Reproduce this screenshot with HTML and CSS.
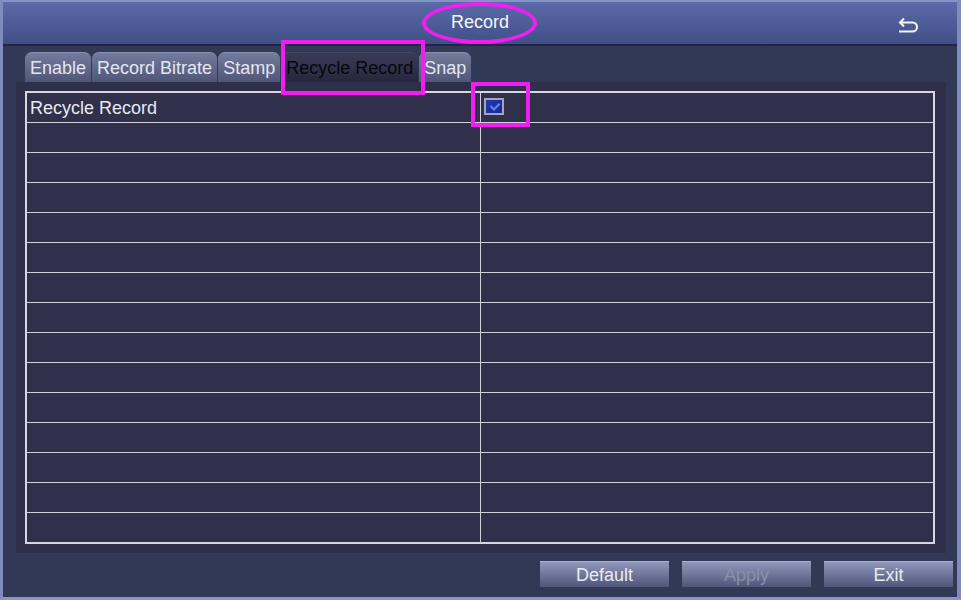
FILE: index.html
```html
<!DOCTYPE html>
<html>
<head>
  <meta charset='utf-8'>
  <title>Record</title>
  <meta name='viewport' content='width=device-width, initial-scale=1'>
  <link rel="stylesheet" href="styles.css">
</head>
<body>
  <div class="screen">
    <div class="header">
      <div></div>
      <div class="title">Record</div>
      <div class="back">
        <svg width="24" height="16" viewBox="0 0 24 16">
          <path d="M3 5.5 H15.5 A4.5 4.5 0 0 1 15.5 14.5 H2" fill="none" stroke="#f4f6fc" stroke-width="2"/>
          <path d="M7 1.5 L3 5.5 L7 9.5" fill="none" stroke="#f4f6fc" stroke-width="2"/>
        </svg>
      </div>
    </div>

    <div class="content">
      <div class="tabs">
        <div class="tab">Enable</div>
        <div class="tab">Record Bitrate</div>
        <div class="tab">Stamp</div>
        <div class="tab active">Recycle Record</div>
        <div class="tab">Snap</div>
      </div>

      <div class="panel">
        <div class="grid" id="grid">
          <div class="row">
            <div class="cell">Recycle Record</div>
            <div class="cell"><span class="check"></span></div>
          </div>
        </div>
      </div>

      <div class="buttons">
        <div class="button">Default</div>
        <div class="button disabled">Apply</div>
        <div class="button">Exit</div>
      </div>
    </div>

    <!-- highlight marks -->
    <div class="mark mark-title"></div>
    <div class="mark mark-tab"></div>
    <div class="mark mark-check"></div>
  </div>

  <script>
    // fill the rest of the settings grid with empty rows
    let grid = document.getElementById("grid");
    for (let i = 0; i < 14; i++) {
      let row = document.createElement("div");
      row.className = "row";
      row.innerHTML = '<div class="cell"></div><div class="cell"></div>';
      grid.appendChild(row);
    }
  </script>
</body>
</html>
```

FILE: styles.css
```css
html, body {
  margin: 0;
  height: 100%;
}

body {
  background-color: #2f3654;
  font-family: "Liberation Sans", Arial, Helvetica, sans-serif;
  font-size: 18px;
  color: #e6e9f2;
}

.screen {
  position: relative;
  width: 961px;
  height: 600px;
  box-sizing: border-box;
  border-left: 3px solid #7d8cbc;
  border-right: 4px solid #7d8cbc;
  border-bottom: 3px solid #8798c4;
  background-color: #313956;
  display: flex;
  flex-flow: column nowrap;
}

.header {
  height: 42px;
  border-top: 2px solid #8493c6;
  border-bottom: 2px solid #1f2542;
  background: linear-gradient(#5b6aa8, #414f88);
  display: grid;
  grid-template-columns: 1fr auto 1fr;
  align-items: center;
}

.title {
  color: #f6f7fb;
  padding-bottom: 1px;
}

.back {
  justify-self: end;
  padding-right: 36px;
  padding-top: 3px;
  display: flex;
}

.content {
  flex: 1;
  display: flex;
  flex-flow: column nowrap;
  padding-top: 6px;
}

.tabs {
  display: flex;
  gap: 1px;
  margin-left: 22px;
  height: 30px;
}

.tab {
  padding: 0 5px;
  line-height: 31px;
  border-radius: 7px 7px 0 0;
  background: linear-gradient(#737b9c, #4f5677);
  border-top: 1px solid #8a92b2;
  box-sizing: border-box;
  color: #e3e6ef;
}

.tab.active {
  background: linear-gradient(#3a3b58, #26273e);
  border-top-color: #45465f;
  color: #07070c;
}

.panel {
  margin-left: 13px;
  width: 930px;
  height: 471px;
  box-sizing: border-box;
  padding: 9px 0 9px 9px;
  background-color: #302f4b;
}

.grid {
  width: 910px;
  box-sizing: border-box;
  border: 2px solid #d6d7e3;
  background-color: #30304a;
}

.row {
  display: grid;
  grid-template-columns: 453px 1fr;
  height: 30px;
  box-sizing: border-box;
  border-bottom: 1px solid #cfd0de;
}

.row:last-child {
  height: 29px;
  border-bottom: none;
}

.cell {
  padding-left: 3px;
  line-height: 28px;
  display: flex;
  align-items: center;
}

.cell + .cell {
  border-left: 1px solid #cfd0de;
}

.check {
  width: 20px;
  height: 17px;
  box-sizing: border-box;
  border: 2px solid #a3a6ba;
  background: linear-gradient(135deg, #2336b8, #1a2a8e);
  position: relative;
  margin-top: -3px;
}

.check::after {
  content: "";
  position: absolute;
  left: 6px;
  top: 1px;
  width: 4px;
  height: 7px;
  border-right: 2px solid #5c8cf4;
  border-bottom: 2px solid #5c8cf4;
  transform: rotate(45deg);
}

.buttons {
  display: flex;
  justify-content: flex-end;
  gap: 13px;
  padding-right: 4px;
  margin-top: 8px;
}

.button {
  width: 129px;
  height: 26px;
  line-height: 27px;
  text-align: center;
  background: linear-gradient(#8f98bb, #4e5778);
  border-top: 1px solid #a9b1cf;
  box-sizing: border-box;
  color: #e9ecf4;
}

.button.disabled {
  color: #8990ab;
}

.mark {
  position: absolute;
  border: 4px solid #f21ef0;
  box-sizing: border-box;
}

.mark-title {
  left: 419px;
  top: 2px;
  width: 115px;
  height: 42px;
  border-radius: 50%;
}

.mark-tab {
  left: 278px;
  top: 40px;
  width: 144px;
  height: 55px;
}

.mark-check {
  left: 468px;
  top: 82px;
  width: 59px;
  height: 45px;
}
```
